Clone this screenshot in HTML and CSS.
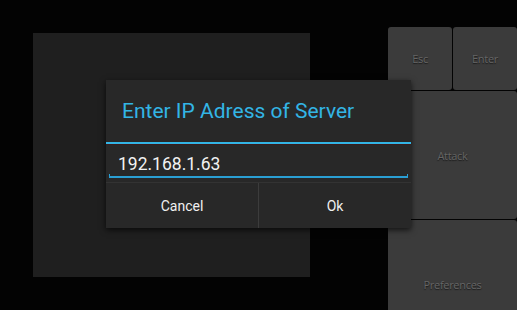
FILE: index.html
```html
<!DOCTYPE html>
<html>
<head>
<meta charset="utf-8">
<link rel="stylesheet" href="styles.css">
</head>
<body>
<div class="screen">
  <div class="canvas-panel"></div>
  <div class="keys">
    <div class="key">Esc</div>
    <div class="key">Enter</div>
    <div class="key wide">Attack</div>
    <div class="key wide">Preferences</div>
  </div>
  <div class="dialog">
    <div class="dialog-title">Enter IP Adress of Server</div>
    <div class="dialog-body">
      <div class="field-text">192.168.1.63</div>
      <div class="field-line"></div>
    </div>
    <div class="dialog-buttons">
      <div class="dbtn">Cancel</div>
      <div class="dbtn">Ok</div>
    </div>
  </div>
</div>
</body>
</html>
```
FILE: styles.css
```css
html, body {
  margin: 0;
  padding: 0;
  background: #030303;
  overflow: hidden;
}
.screen {
  position: relative;
  width: 517px;
  height: 310px;
  overflow: hidden;
  display: flex;
  align-items: flex-start;
}
.canvas-panel {
  margin-left: 33px;
  margin-top: 33px;
  width: 277px;
  height: 244px;
  background: #1f1f1f;
}
.keys {
  margin-left: 78px;
  margin-top: 27px;
  width: 129px;
  display: grid;
  grid-template-columns: 64px 64px;
  grid-template-rows: 63px 128px 128px;
  gap: 1px;
  background: #030303;
}
.key {
  background: #3b3b3b;
  border-radius: 3px;
  display: flex;
  align-items: center;
  justify-content: center;
  font-family: "Open Sans", "DejaVu Sans", sans-serif;
  font-size: 11px;
  color: #656565;
  text-shadow: 0 1px 1px #1a1a1a;
  letter-spacing: -0.3px;
}
.key.wide {
  grid-column: span 2;
}
.dialog {
  position: absolute;
  left: 106px;
  top: 80px;
  width: 305px;
  background: #282828;
  box-shadow: 0 2px 6px rgba(0,0,0,0.7);
  font-family: Roboto, "Noto Sans", sans-serif;
}
.dialog-title {
  height: 64px;
  box-sizing: border-box;
  padding-left: 16px;
  padding-top: 19px;
  font-size: 21px;
  line-height: 24px;
  color: #33b5e5;
  border-bottom: 2px solid #33b5e5;
}
.dialog-body {
  height: 39px;
  box-sizing: border-box;
  padding: 9px 3px 0 3px;
  border-bottom: 1px solid #333;
  border-top: 1px solid #3a1c1c;
}
.field-text {
  padding-left: 9px;
  font-size: 17.5px;
  line-height: 20px;
  color: #f2f2f2;
}
.field-line {
  height: 2px;
  border: 1px solid #2a9fd4;
  border-top: none;
  border-bottom-width: 2px;
}
.dialog-buttons {
  display: flex;
  height: 45px;
}
.dbtn {
  flex: 1;
  display: flex;
  align-items: center;
  justify-content: center;
  font-size: 14px;
  color: #f0f0f0;
}
.dbtn + .dbtn {
  border-left: 1px solid #3c3c3c;
}
```
